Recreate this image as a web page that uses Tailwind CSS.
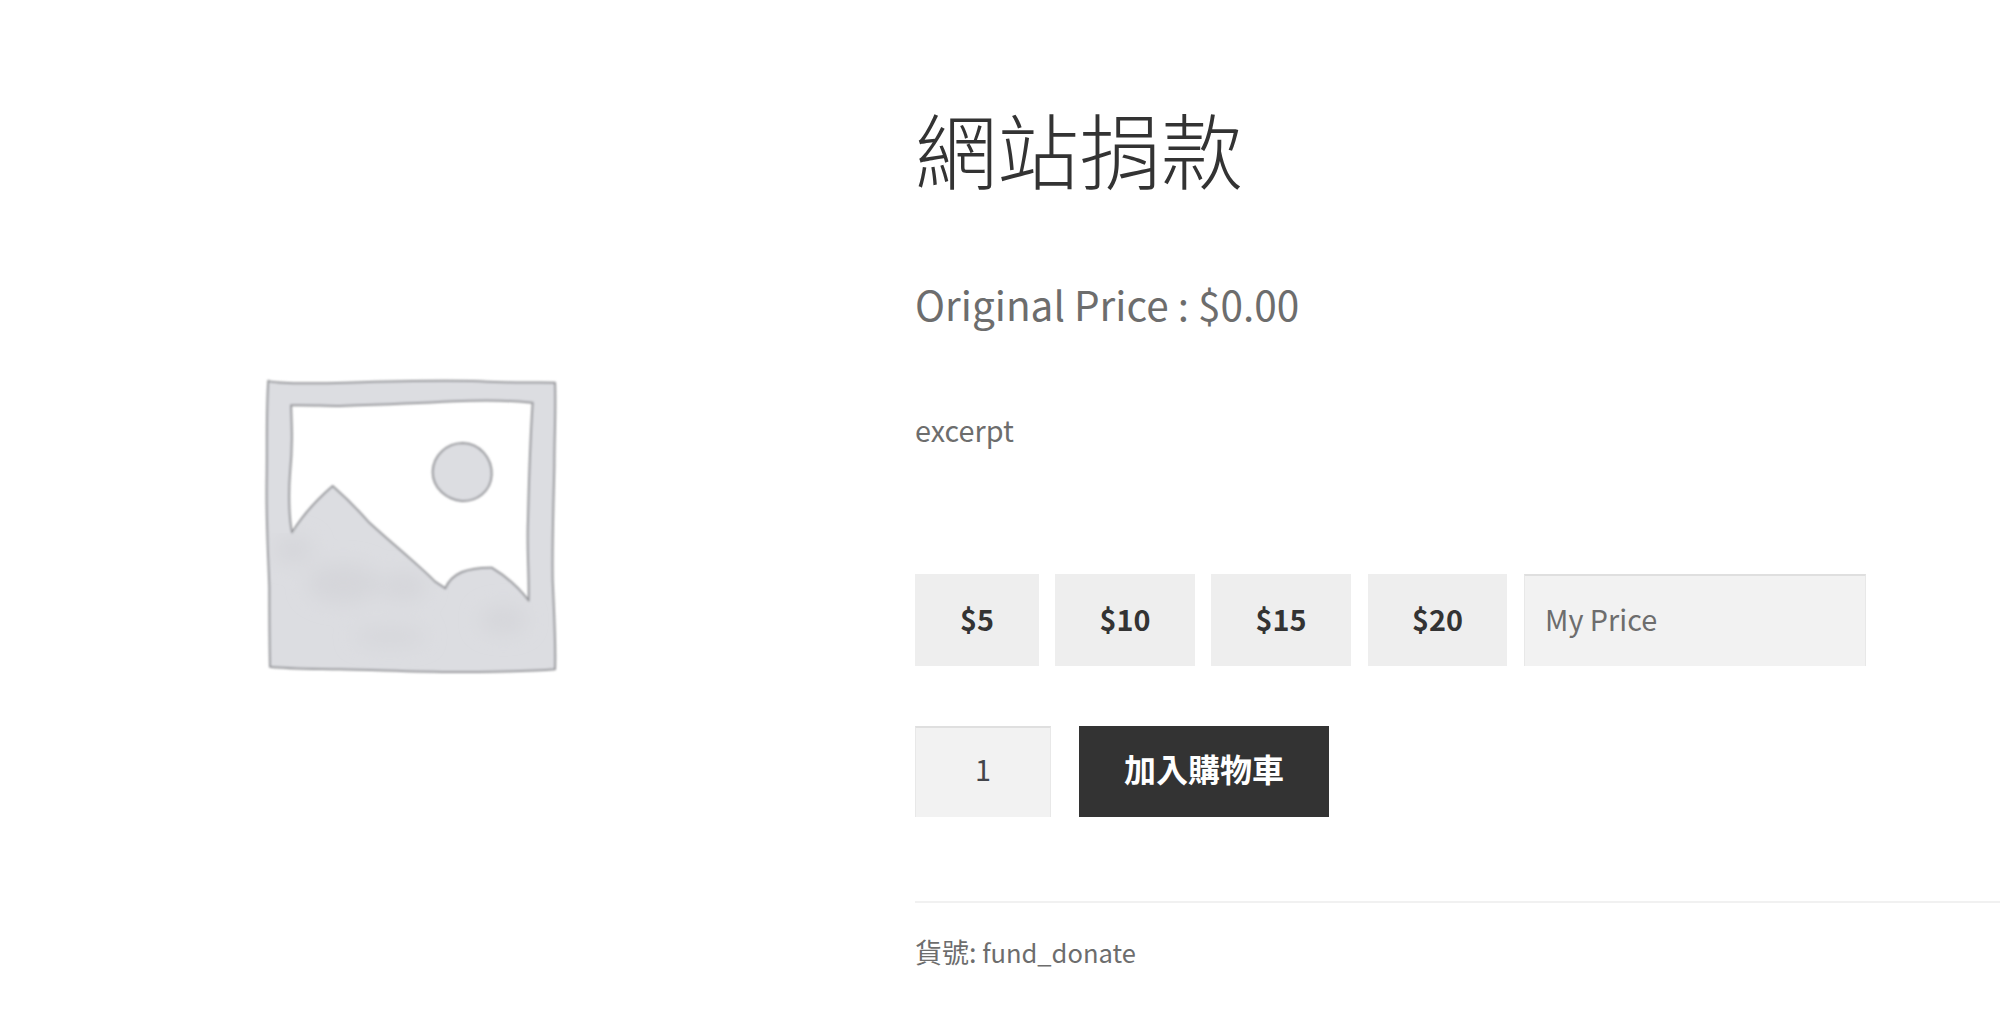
<!DOCTYPE html>
<html lang="zh-Hant">
<head>
<meta charset="UTF-8">
<title>網站捐款</title>
<script src="https://cdn.jsdelivr.net/npm/@tailwindcss/browser@4"></script>
</head>
<body class="bg-white h-[1016px] overflow-hidden font-['Noto_Sans_CJK_TC','Noto_Sans',sans-serif] text-[#6d6d6d]">
<main class="flex h-[1016px] overflow-hidden">
  <!-- product image -->
  <div class="w-[915px] shrink-0 pl-[240px] pt-[360px]">
    <svg class="w-[340px] h-[320px]" viewBox="0 0 1020 960" xmlns="http://www.w3.org/2000/svg">
      <defs>
        <filter id="soft" x="-5%" y="-5%" width="110%" height="110%"><feGaussianBlur stdDeviation="2.6"/></filter>
        <filter id="mottle" x="-30%" y="-30%" width="160%" height="160%"><feGaussianBlur stdDeviation="30"/></filter>
        <clipPath id="shape"><path d="M156 518C185 470 235 415 278 378C320 415 350 445 385 485C450 545 530 610 585 665L616 685C635 640 680 622 755 623C800 650 835 680 866 722L945 722L945 930L95 922L85 518Z"/></clipPath>
      </defs>
      <g filter="url(#soft)">
        <path fill-rule="evenodd" fill="#dcdde1" stroke="#96979b" stroke-width="6" stroke-linejoin="round"
          d="M85 62C92 70 200 72 320 68C450 64 600 60 720 64C820 70 900 66 945 68C948 150 943 230 943 320C940 450 936 560 938 660C942 760 948 850 945 928C860 936 780 934 680 936C560 938 420 930 300 928C210 926 140 926 90 920C88 820 88 760 88 680C84 560 78 480 80 360C82 260 78 160 85 62Z
             M153 136C156 210 158 260 150 340C146 390 146 470 156 518C185 470 235 415 278 378C320 415 350 445 385 485C450 545 530 610 585 665L616 685C635 640 680 622 755 623C800 650 835 680 866 722C868 650 860 560 864 480C866 390 870 250 878 128C800 120 730 120 640 124C530 130 420 134 300 138C250 138 200 134 153 136Z"/>
        <path fill="#dcdde1" stroke="#96979b" stroke-width="6" d="M668 249C720 250 757 295 755 345C752 395 710 425 665 423C620 418 578 385 578 335C580 285 620 250 668 249Z"/>
      </g>
      <g clip-path="url(#shape)" filter="url(#mottle)" fill="#d5d6da">
        <ellipse cx="310" cy="670" rx="110" ry="60"/>
        <ellipse cx="490" cy="680" rx="70" ry="40"/>
        <ellipse cx="160" cy="570" rx="60" ry="40"/>
        <ellipse cx="790" cy="780" rx="70" ry="40"/>
        <ellipse cx="450" cy="830" rx="110" ry="25"/>
      </g>
    </svg>
  </div>
  <!-- summary -->
  <div class="flex-1 min-w-0">
    <h1 class="mt-[89px] text-[82px] leading-[117px] font-light text-[#333333]">網站捐款</h1>
    <p class="mt-[68px] text-[40.5px] leading-[60px]">Original Price : $0.00</p>
    <p class="mt-[74px] text-[28.8px] leading-[44px]">excerpt</p>
    <div class="mt-[122px] flex h-[92px] text-[28.8px] font-bold text-[#333333]">
      <button class="w-[124px] bg-[#eeeeee] mr-[16px] pb-[2px]">$5</button>
      <button class="w-[140px] bg-[#eeeeee] mr-[16px] pb-[2px]">$10</button>
      <button class="w-[140px] bg-[#eeeeee] mr-[17px] pb-[2px]">$15</button>
      <button class="w-[139px] bg-[#eeeeee] mr-[17px] pb-[2px]">$20</button>
      <input class="w-[342px] bg-[#f2f2f2] pl-[20px] pb-[4px] text-[28.8px] font-normal border border-[#e8e8e8] border-b-0 border-t-2 border-t-[#dfdfdf] placeholder:text-[#6d6d6d] outline-none" placeholder="My Price">
    </div>
    <div class="mt-[60px] flex h-[91px]">
      <div class="w-[136px] pb-[8px] bg-[#f2f2f2] border border-[#e8e8e8] border-b-0 border-t-2 border-t-[#dfdfdf] flex items-center justify-center text-[28.8px] text-[#43454b]">1</div>
      <button class="ml-[28px] w-[250px] pb-[8px] bg-[#333333] text-white text-[32px] font-bold">加入購物車</button>
    </div>
    <div class="mt-[84px] h-[2px] bg-[#f1f1f1]"></div>
    <p class="mt-[25px] text-[25.5px] leading-[48px]"><span class="text-[27px]">貨號:</span> fund_donate</p>
  </div>
</main>
</body>
</html>
